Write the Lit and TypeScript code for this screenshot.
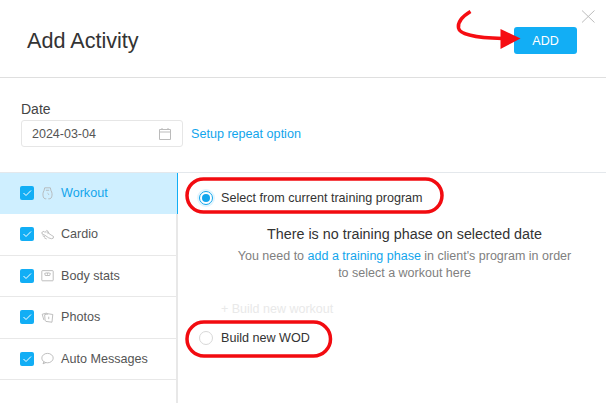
import { LitElement, html, css, svg } from "lit";
import { customElement } from "lit/decorators.js";

const icons: Record<string, unknown> = {
  workout: svg`<path d="M4.500 1h7l.8 3.500M4.500 1l-.8 3.500M6 4h4"/><path d="M3.700 4.500C2.300 6.500 2 9.500 2.800 12c.3 1.200 1 2 2 2.500M12.300 4.500c1.400 2 1.700 5 .9 7.500-.3 1.200-1 2-2 2.500" /><path d="M5 14.500h1.500M9 14.500h2M8 7.500c1 .5 1.500 1.200 1.500 2"/>`,
  cardio: svg`<path d="M1 5.500 3.500 4 5 5.500 7 3l1.500 1 1.500 3 3 2 2.500 1.500-.5 2-2 .7-3.500-1L5 9 1.500 7.500Z"/><path d="M2 9.500l3 1.500M4 12l3 1.500M7 5.500l1.500-.5M8 7l1.500-.7"/>`,
  body: svg`<rect x="1" y="2" width="14" height="12.500" rx=".8"/><path d="M4.500 5.500c2-1 5-1 7 0l-.8 2.500H5.300ZM8 5v2"/>`,
  photos: svg`<path d="M1.500 4 7 2.500l1 1.700M3.500 11 1.500 4M5 11.500l-.5-7 4-1"/><path d="m8 3.300 6.500 1-1 9.500-7.500-1-1-1.500"/><path d="M9.500 7v3"/>`,
  msg: svg`<ellipse cx="8" cy="7.500" rx="7" ry="5.800"/><path d="m3.500 12-1 2.500 3.500-1.500"/>`,
};

const rows = [
  { key: "workout", label: "Workout", active: true },
  { key: "cardio", label: "Cardio" },
  { key: "body", label: "Body stats" },
  { key: "photos", label: "Photos" },
  { key: "msg", label: "Auto Messages" },
];

@customElement("app-root")
export class AppRoot extends LitElement {
  static styles = css`
    :host { display: block; width: 606px; height: 403px; overflow: hidden; background: #fff; position: relative;
      font-family: "Liberation Sans", Arial, sans-serif; color: #333; }
    .head { height: 77px; border-bottom: 1px solid #dfdfdf; display: flex; align-items: center; justify-content: space-between; padding: 0 29px 0 27px; }
    h1 { margin: 4px 0 0; font-size: 21.6px; font-weight: 400; line-height: 26px; color: #333; }
    .add { width: 63px; height: 27px; margin-top: 4px; background: #12aef5; color: #fff; border-radius: 3px; font-size: 12.5px; display: flex; align-items: center; justify-content: center; }
    .date { height: 94px; padding: 23px 0 0 21px; box-sizing: border-box; }
    .date label { display: block; font-size: 14px; line-height: 17px; color: #444; margin-bottom: 2px; }
    .date-row { display: flex; align-items: center; gap: 8px; }
    .input { width: 162px; height: 27px; box-sizing: border-box; border: 1px solid #e6e6e6; border-radius: 3px; display: flex; align-items: center; justify-content: space-between; padding: 0 11px 0 10px; font-size: 12.5px; color: #555; }
    .link { color: #12a5ec; font-size: 12.6px; }
    .body { display: flex; height: 231px; border-top: 1px solid #e4e8ec; }
    .side { width: 176px; flex: none; border-right: 2px solid #e8e8e8; }
    .row { height: 41.5px; box-sizing: border-box; border-bottom: 1px solid #e8e8e8; display: flex; align-items: center; padding-left: 20px; font-size: 12.6px; color: #555; }
    .row.active { height: 41px; padding-bottom: 1px; background: #cfefff; color: #12a5ec; margin-right: -2px; border-right: 1px solid #12aef5; border-bottom: none; }
    .cb { width: 14px; height: 14px; background: #12aef5; border-radius: 2px; display: flex; align-items: center; justify-content: center; margin-right: 7px; }
    .ic { width: 13px; height: 13px; margin-right: 7px; fill: none; stroke: #b0b0b0; stroke-width: 1; }
    .main { flex: 1; padding: 0 0 0 21px; }
    .radio { display: flex; align-items: center; gap: 8px; font-size: 12.6px; color: #333; height: 20px; }
    .dot { width: 14px; height: 14px; box-sizing: border-box; border: 1px solid #d8d8d8; border-radius: 50%; }
    .dot.on { border-color: #12a5ec; box-shadow: 0 0 0 2px #e2f5fe; display: flex; align-items: center; justify-content: center; }
    .dot.on::after { content: ""; width: 8px; height: 8px; background: #12a5ec; border-radius: 50%; }
    .r1 { margin-top: 15px; }
    .msg { text-align: center; margin: 17px 0 0 4px; }
    .msg h2 { margin: 0 0 5px; font-size: 14.35px; font-weight: 400; line-height: 18px; color: #333; }
    .msg p { margin: 0; font-size: 12.5px; line-height: 17px; color: #808080; }
    .msg a { color: #12a5ec; }
    .build { margin: 19px 0 0 22px; font-size: 12.5px; line-height: 16px; color: #e9e9e9; }
    .r2 { margin-top: 11px; }
    .mark { position: absolute; inset: 0; width: 606px; height: 403px; pointer-events: none; fill: none; }
  `;

  render() {
    return html`
      <div class="head"><h1>Add Activity</h1><div class="add">ADD</div></div>
      <div class="date">
        <label>Date</label>
        <div class="date-row">
          <div class="input">2024-03-04
            <svg width="12" height="12" viewBox="0 0 12 12" fill="none" stroke="#bbb"><path d="M.5 1.500h11v10H.5ZM.5 4h11M3 0v2M9 0v2"/></svg>
          </div>
          <span class="link">Setup repeat option</span>
        </div>
      </div>
      <div class="body">
        <div class="side">
          ${rows.map(r => html`<div class="row ${r.active ? "active" : ""}">
            <span class="cb"><svg width="10" height="8" viewBox="0 0 10 8" fill="none" stroke="#fff" stroke-width="1"><path d="m1.500 4 2.500 2.500 5-5"/></svg></span>
            <svg class="ic" viewBox="0 0 16 16">${icons[r.key]}</svg>
            <span>${r.label}</span>
          </div>`)}
        </div>
        <div class="main">
          <div class="radio r1"><span class="dot on"></span>Select from current training program</div>
          <div class="msg">
            <h2>There is no training phase on selected date</h2>
            <p>You need to <a>add a training phase</a> in client's program in order<br>to select a workout here</p>
          </div>
          <div class="build">+ Build new workout</div>
          <div class="radio r2"><span class="dot"></span>Build new WOD</div>
        </div>
      </div>
      <svg class="mark" viewBox="0 0 606 403">
        <path d="M582 10.500 594.500 22.500M594.500 10.500 582 22.500" stroke="#bdbdbd" stroke-width="1"/>
        <path d="M470.500 11.500C463 16 457.500 22 458.500 28c1 6 16 10 44 10.500" stroke="#f60d12" stroke-width="3.500"/>
        <path d="M500.500 29 520.500 38.500 500.500 49Z" fill="#f60d12"/>
        <rect x="187" y="179" width="255" height="33" rx="16.500" stroke="#f20b10" stroke-width="3.500"/>
        <rect x="187" y="322" width="143.500" height="34" rx="17" stroke="#f20b10" stroke-width="3.500"/>
      </svg>
    `;
  }
}
